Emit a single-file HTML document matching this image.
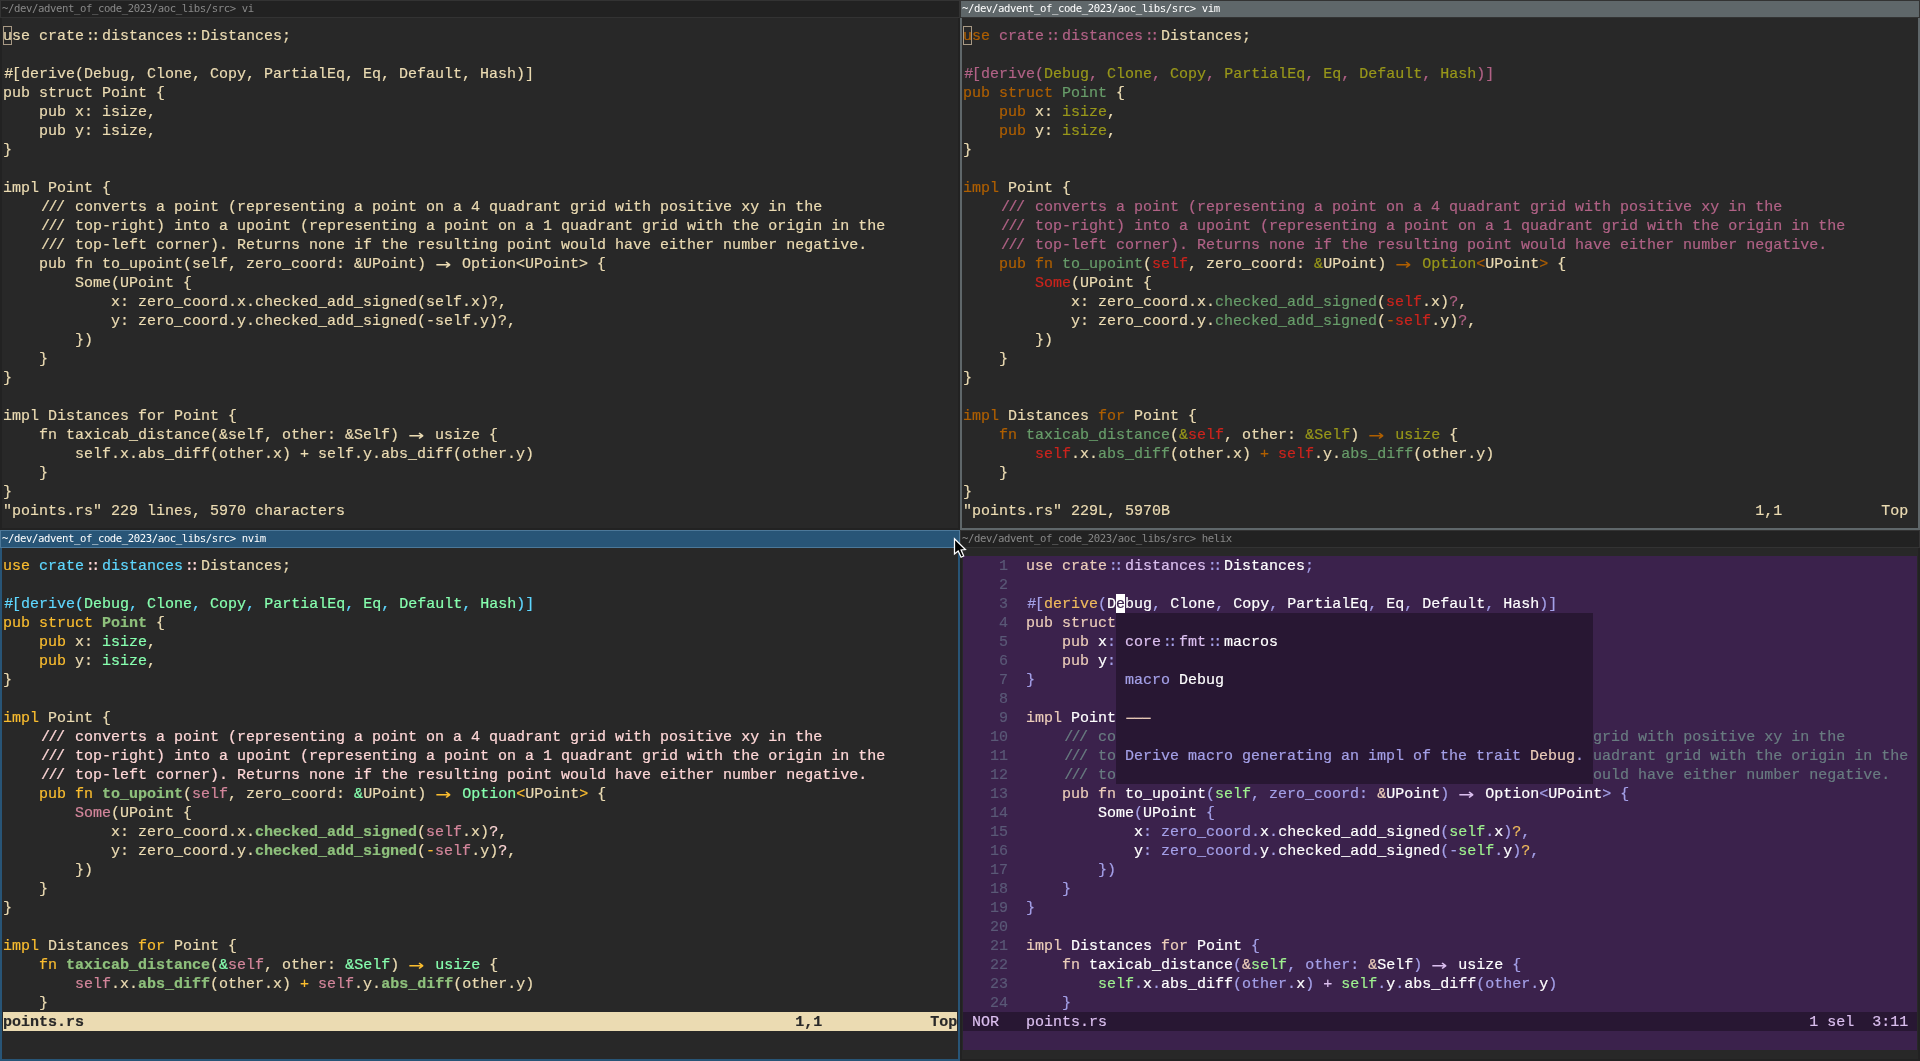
<!DOCTYPE html>
<html lang="en">
<head>
<meta charset="utf-8">
<title>vi / vim / nvim / helix</title>
<style>
html,body{margin:0;padding:0}
body{width:1920px;height:1061px;overflow:hidden;background:#282828;position:relative;
 font-family:"Liberation Mono",monospace;font-size:15px;line-height:19px;color:#ebdbb2}
.tb{position:absolute;width:958px;height:16px;border:1px solid #333;box-sizing:content-box;overflow:hidden;white-space:pre;
 font-family:"DejaVu Sans Mono","Liberation Mono",monospace;font-size:10.667px;line-height:16px;letter-spacing:-.4226px}
.tb span{position:absolute;left:.8px;top:0;will-change:transform}
.tb-un{background:#222;color:#888}
.tb-in{background:#5f676a;color:#fff}
.tb-fo{background:#285577;color:#fff;border-color:#4c7899}
.fr{position:absolute;width:960px;border:2px solid #222;border-top:0;box-sizing:border-box}
.fr-un{border-color:#222}
.fr-in{border-color:#5f676a}
.fr-fo{border-color:#285577}
.g{position:absolute;width:954px;-webkit-text-stroke-width:.2px;will-change:transform}
.r{height:19px;width:954px;overflow:visible;white-space:pre;line-height:21px}
.g2{display:inline-block;width:18px;letter-spacing:-3.4px;text-indent:1.7px}
.g3{display:inline-block;width:27px;letter-spacing:-1.6px;text-indent:2.1px}
.ar{display:inline-block;width:18px;height:19px;vertical-align:top;font-family:'DejaVu Sans Mono',monospace;font-size:20px;line-height:19px;-webkit-text-stroke-width:0}
.ar i{display:inline-block;font-style:normal;transform-origin:0 50%;transform:translateX(.3px) scaleX(1.3)}
.br{font-weight:normal;display:inline-block;width:9px;transform:translateX(1.2px)}
.hc{position:absolute;width:9px;height:19px;box-sizing:border-box;border:1px solid #a89984}
/* vim (default scheme, light-bg groups on gruvbox palette) */
.vim .st{color:#af5f00}.vim .pp,.vim .sp{color:#b16286}.vim .ty{color:#98971a}.vim .id{color:#689d6a}.vim .cn{color:#cc241d}
/* nvim */
.nvim .st{color:#fabd2f}.nvim .pp{color:#5fd7ff}.nvim .sp{color:#ffd7d7}.nvim .ty{color:#87ffaf}.nvim .id{color:#8ec07c;font-weight:bold}.nvim .cn{color:#d3869b}
.sl{background:#ebdbb2;color:#282828;font-weight:bold}
/* helix */
.hx{background:#3b224c;height:494px;color:#a4a0e8}
.al{color:#eccdba}.li{color:#dbbfef}.lv{color:#a4a0e8}.wh{color:#fff}.ho{color:#efba5d}.mi{color:#9ff28f}.si{color:#697c81}
.ln{color:#5a5977}
.bc{display:inline-block;height:19px;vertical-align:top;background:#fff;color:#3b224c}
.hsl{background:#281733;color:#dbbfef}
.pop{position:absolute;left:153px;top:57px;width:477px;height:171px;background:#281733}
.pop .r{width:477px}
.hr{display:inline-block;width:27px;transform-origin:0 50%;transform:translate(1.6px,.5px) scaleX(.89)}
.mouse{position:absolute}

</style>
</head>
<body>
<div class="tb tb-un" style="left:0;top:0"><span>~/dev/advent_of_code_2023/aoc_libs/src&gt; vi</span></div>
<div class="tb tb-in" style="left:960px;top:0"><span>~/dev/advent_of_code_2023/aoc_libs/src&gt; vim</span></div>
<div class="fr fr-un" style="left:0;top:18px;height:512px"></div>
<div class="fr fr-in" style="left:960px;top:18px;height:512px"></div>
<div class="tb tb-fo" style="left:0;top:530px"><span>~/dev/advent_of_code_2023/aoc_libs/src&gt; nvim</span></div>
<div class="tb tb-un" style="left:960px;top:530px"><span>~/dev/advent_of_code_2023/aoc_libs/src&gt; helix</span></div>
<div class="fr fr-fo" style="left:0;top:548px;height:513px"></div>
<div class="fr fr-un" style="left:960px;top:548px;height:513px"></div>

<div class="g vi" style="left:3px;top:26px">
<div class="hc"></div><div class="r">use crate<span class="g2">::</span>distances<span class="g2">::</span>Distances;</div>
<div class="r"></div>
<div class="r"><b class="br">#</b>[derive(Debug, Clone, Copy, PartialEq, Eq, Default, Hash)]</div>
<div class="r">pub struct Point {</div>
<div class="r">    pub x: isize,</div>
<div class="r">    pub y: isize,</div>
<div class="r">}</div>
<div class="r"></div>
<div class="r">impl Point {</div>
<div class="r">    <span class="g3">///</span> converts a point (representing a point on a 4 quadrant grid with positive xy in the</div>
<div class="r">    <span class="g3">///</span> top-right) into a upoint (representing a point on a 1 quadrant grid with the origin in the</div>
<div class="r">    <span class="g3">///</span> top-left corner). Returns none if the resulting point would have either number negative.</div>
<div class="r">    pub fn to_upoint(self, zero_coord: &amp;UPoint) <span class="ar"><i>&rarr;</i></span> Option&lt;UPoint&gt; {</div>
<div class="r">        Some(UPoint {</div>
<div class="r">            x: zero_coord.x.checked_add_signed(self.x)?,</div>
<div class="r">            y: zero_coord.y.checked_add_signed(-self.y)?,</div>
<div class="r">        })</div>
<div class="r">    }</div>
<div class="r">}</div>
<div class="r"></div>
<div class="r">impl Distances for Point {</div>
<div class="r">    fn taxicab_distance(&amp;self, other: &amp;Self) <span class="ar"><i>&rarr;</i></span> usize {</div>
<div class="r">        self.x.abs_diff(other.x) + self.y.abs_diff(other.y)</div>
<div class="r">    }</div>
<div class="r">}</div>
<div class="r">"points.rs" 229 lines, 5970 characters</div>
</div>

<div class="g vim" style="left:963px;top:26px">
<div class="hc"></div><div class="r"><span class="st">use </span><span class="pp">crate</span><span class="sp g2">::</span><span class="pp">distances</span><span class="sp g2">::</span>Distances;</div>
<div class="r"></div>
<div class="r"><span class="pp"><b class="br">#</b>[</span><span class="pp">derive(</span><span class="ty">Debug</span><span class="pp">, </span><span class="ty">Clone</span><span class="pp">, </span><span class="ty">Copy</span><span class="pp">, </span><span class="ty">PartialEq</span><span class="pp">, </span><span class="ty">Eq</span><span class="pp">, </span><span class="ty">Default</span><span class="pp">, </span><span class="ty">Hash</span><span class="pp">)]</span></div>
<div class="r"><span class="st">pub struct </span><span class="id">Point </span>{</div>
<div class="r">    <span class="st">pub </span>x: <span class="ty">isize</span>,</div>
<div class="r">    <span class="st">pub </span>y: <span class="ty">isize</span>,</div>
<div class="r">}</div>
<div class="r"></div>
<div class="r"><span class="st">impl </span>Point {</div>
<div class="r">    <span class="sp g3">///</span><span class="sp"> converts a point (representing a point on a 4 quadrant grid with positive xy in the</span></div>
<div class="r">    <span class="sp g3">///</span><span class="sp"> top-right) into a upoint (representing a point on a 1 quadrant grid with the origin in the</span></div>
<div class="r">    <span class="sp g3">///</span><span class="sp"> top-left corner). Returns none if the resulting point would have either number negative.</span></div>
<div class="r">    <span class="st">pub fn </span><span class="id">to_upoint</span>(<span class="cn">self</span>, zero_coord: <span class="ty">&amp;</span>UPoint) <span class="st ar"><i>&rarr;</i></span> <span class="ty">Option</span><span class="st">&lt;</span>UPoint<span class="st">&gt; </span>{</div>
<div class="r">        <span class="cn">Some</span>(UPoint {</div>
<div class="r">            x: zero_coord.x.<span class="id">checked_add_signed</span>(<span class="cn">self</span>.x)<span class="sp">?</span>,</div>
<div class="r">            y: zero_coord.y.<span class="id">checked_add_signed</span>(<span class="st">-</span><span class="cn">self</span>.y)<span class="sp">?</span>,</div>
<div class="r">        })</div>
<div class="r">    }</div>
<div class="r">}</div>
<div class="r"></div>
<div class="r"><span class="st">impl </span>Distances <span class="st">for </span>Point {</div>
<div class="r">    <span class="st">fn </span><span class="id">taxicab_distance</span>(<span class="ty">&amp;</span><span class="cn">self</span>, other: <span class="ty">&amp;Self</span>) <span class="st ar"><i>&rarr;</i></span> <span class="ty">usize </span>{</div>
<div class="r">        <span class="cn">self</span>.x.<span class="id">abs_diff</span>(other.x) <span class="st">+ </span><span class="cn">self</span>.y.<span class="id">abs_diff</span>(other.y)</div>
<div class="r">    }</div>
<div class="r">}</div>
<div class="r">"points.rs" 229L, 5970B                                                                 1,1           Top</div>
</div>

<div class="g nvim" style="left:3px;top:556px">
<div class="r"><span class="st">use </span><span class="pp">crate</span><span class="sp g2">::</span><span class="pp">distances</span><span class="sp g2">::</span>Distances;</div>
<div class="r"></div>
<div class="r"><span class="pp"><b class="br">#</b>[</span><span class="pp">derive(</span><span class="ty">Debug</span><span class="pp">, </span><span class="ty">Clone</span><span class="pp">, </span><span class="ty">Copy</span><span class="pp">, </span><span class="ty">PartialEq</span><span class="pp">, </span><span class="ty">Eq</span><span class="pp">, </span><span class="ty">Default</span><span class="pp">, </span><span class="ty">Hash</span><span class="pp">)]</span></div>
<div class="r"><span class="st">pub struct </span><span class="id">Point </span>{</div>
<div class="r">    <span class="st">pub </span>x: <span class="ty">isize</span>,</div>
<div class="r">    <span class="st">pub </span>y: <span class="ty">isize</span>,</div>
<div class="r">}</div>
<div class="r"></div>
<div class="r"><span class="st">impl </span>Point {</div>
<div class="r">    <span class="sp g3">///</span><span class="sp"> converts a point (representing a point on a 4 quadrant grid with positive xy in the</span></div>
<div class="r">    <span class="sp g3">///</span><span class="sp"> top-right) into a upoint (representing a point on a 1 quadrant grid with the origin in the</span></div>
<div class="r">    <span class="sp g3">///</span><span class="sp"> top-left corner). Returns none if the resulting point would have either number negative.</span></div>
<div class="r">    <span class="st">pub fn </span><span class="id">to_upoint</span>(<span class="cn">self</span>, zero_coord: <span class="ty">&amp;</span>UPoint) <span class="st ar"><i>&rarr;</i></span> <span class="ty">Option</span><span class="st">&lt;</span>UPoint<span class="st">&gt; </span>{</div>
<div class="r">        <span class="cn">Some</span>(UPoint {</div>
<div class="r">            x: zero_coord.x.<span class="id">checked_add_signed</span>(<span class="cn">self</span>.x)<span class="sp">?</span>,</div>
<div class="r">            y: zero_coord.y.<span class="id">checked_add_signed</span>(<span class="st">-</span><span class="cn">self</span>.y)<span class="sp">?</span>,</div>
<div class="r">        })</div>
<div class="r">    }</div>
<div class="r">}</div>
<div class="r"></div>
<div class="r"><span class="st">impl </span>Distances <span class="st">for </span>Point {</div>
<div class="r">    <span class="st">fn </span><span class="id">taxicab_distance</span>(<span class="ty">&amp;</span><span class="cn">self</span>, other: <span class="ty">&amp;Self</span>) <span class="st ar"><i>&rarr;</i></span> <span class="ty">usize </span>{</div>
<div class="r">        <span class="cn">self</span>.x.<span class="id">abs_diff</span>(other.x) <span class="st">+ </span><span class="cn">self</span>.y.<span class="id">abs_diff</span>(other.y)</div>
<div class="r">    }</div>
<div class="r sl">points.rs                                                                               1,1            Top</div>
</div>

<div class="g hx" style="left:963px;top:556px">
<div class="r"><span class="ln">    1  </span><span class="al">use crate</span><span class="lv g2">::</span><span class="li">distances</span><span class="lv g2">::</span><span class="wh">Distances</span><span class="lv">;</span></div>
<div class="r"><span class="ln">    2  </span></div>
<div class="r"><span class="ln">    3  </span><span class="lv"><b class="br">#</b>[</span><span class="ho">derive</span><span class="lv">(</span><span class="wh">D<span class="bc">e</span>bug</span><span class="lv">, </span><span class="wh">Clone</span><span class="lv">, </span><span class="wh">Copy</span><span class="lv">, </span><span class="wh">PartialEq</span><span class="lv">, </span><span class="wh">Eq</span><span class="lv">, </span><span class="wh">Default</span><span class="lv">, </span><span class="wh">Hash</span><span class="lv">)]</span></div>
<div class="r"><span class="ln">    4  </span><span class="al">pub struct </span><span class="wh">Point </span><span class="lv">{</span></div>
<div class="r"><span class="ln">    5  </span>    <span class="al">pub </span><span class="wh">x</span><span class="lv">: </span><span class="wh">isize</span><span class="lv">,</span></div>
<div class="r"><span class="ln">    6  </span>    <span class="al">pub </span><span class="wh">y</span><span class="lv">: </span><span class="wh">isize</span><span class="lv">,</span></div>
<div class="r"><span class="ln">    7  </span><span class="lv">}</span></div>
<div class="r"><span class="ln">    8  </span></div>
<div class="r"><span class="ln">    9  </span><span class="al">impl </span><span class="wh">Point </span><span class="lv">{</span></div>
<div class="r"><span class="ln">   10  </span>    <span class="si g3">///</span><span class="si"> converts a point (representing a point on a 4 quadrant grid with positive xy in the</span></div>
<div class="r"><span class="ln">   11  </span>    <span class="si g3">///</span><span class="si"> top-right) into a upoint (representing a point on a 1 quadrant grid with the origin in the</span></div>
<div class="r"><span class="ln">   12  </span>    <span class="si g3">///</span><span class="si"> top-left corner). Returns none if the resulting point would have either number negative.</span></div>
<div class="r"><span class="ln">   13  </span>    <span class="al">pub fn </span><span class="wh">to_upoint</span><span class="lv">(</span><span class="mi">self</span><span class="lv">, zero_coord: </span><span class="al">&amp;</span><span class="wh">UPoint</span><span class="lv">) </span><span class="li ar"><i>&rarr;</i></span> <span class="wh">Option</span><span class="lv">&lt;</span><span class="wh">UPoint</span><span class="lv">&gt; {</span></div>
<div class="r"><span class="ln">   14  </span>        <span class="wh">Some</span><span class="lv">(</span><span class="wh">UPoint </span><span class="lv">{</span></div>
<div class="r"><span class="ln">   15  </span>            <span class="wh">x</span><span class="lv">: zero_coord.</span><span class="wh">x</span><span class="lv">.</span><span class="wh">checked_add_signed</span><span class="lv">(</span><span class="mi">self</span><span class="lv">.</span><span class="wh">x</span><span class="lv">)</span><span class="ho">?</span><span class="lv">,</span></div>
<div class="r"><span class="ln">   16  </span>            <span class="wh">y</span><span class="lv">: zero_coord.</span><span class="wh">y</span><span class="lv">.</span><span class="wh">checked_add_signed</span><span class="lv">(-</span><span class="mi">self</span><span class="lv">.</span><span class="wh">y</span><span class="lv">)</span><span class="ho">?</span><span class="lv">,</span></div>
<div class="r"><span class="ln">   17  </span>        <span class="lv">})</span></div>
<div class="r"><span class="ln">   18  </span>    <span class="lv">}</span></div>
<div class="r"><span class="ln">   19  </span><span class="lv">}</span></div>
<div class="r"><span class="ln">   20  </span></div>
<div class="r"><span class="ln">   21  </span><span class="al">impl </span><span class="wh">Distances </span><span class="al">for </span><span class="wh">Point </span><span class="lv">{</span></div>
<div class="r"><span class="ln">   22  </span>    <span class="al">fn </span><span class="wh">taxicab_distance</span><span class="lv">(</span><span class="al">&amp;</span><span class="mi">self</span><span class="lv">, other: </span><span class="al">&amp;</span><span class="wh">Self</span><span class="lv">) </span><span class="li ar"><i>&rarr;</i></span> <span class="wh">usize </span><span class="lv">{</span></div>
<div class="r"><span class="ln">   23  </span>        <span class="mi">self</span><span class="lv">.</span><span class="wh">x</span><span class="lv">.</span><span class="wh">abs_diff</span><span class="lv">(other.</span><span class="wh">x</span><span class="lv">) </span><span class="li">+ </span><span class="mi">self</span><span class="lv">.</span><span class="wh">y</span><span class="lv">.</span><span class="wh">abs_diff</span><span class="lv">(other.</span><span class="wh">y</span><span class="lv">)</span></div>
<div class="r"><span class="ln">   24  </span>    <span class="lv">}</span></div>
<div class="r hsl"> NOR   points.rs                                                                              1 sel  3:11 </div>
<div class="pop">
<div class="r"> </div>
<div class="r"> <span class="li">core</span><span class="lv g2">::</span><span class="li">fmt</span><span class="lv g2">::</span><span class="wh">macros</span></div>
<div class="r"> </div>
<div class="r"> <span class="lv">macro</span> <span class="wh">Debug</span></div>
<div class="r"> </div>
<div class="r"> <span class="al hr">&#9472;&#9472;&#9472;</span></div>
<div class="r"> </div>
<div class="r"> <span class="lv">Derive macro generating an impl of the trait </span><span class="al">Debug</span><span class="lv">.</span></div>
<div class="r"> </div>
</div>
</div>

<svg class="mouse" width="20" height="26" viewBox="-2.5 -2 20 26" style="left:952px;top:536px"><path d="M0,0.8 L0,16 L3.7,12.9 L6.6,19.2 L9.2,18 L6.6,12 L10.9,11.6 Z" fill="#000" stroke="#fff" stroke-width="1.25" stroke-linejoin="miter"/></svg>

</body>
</html>
